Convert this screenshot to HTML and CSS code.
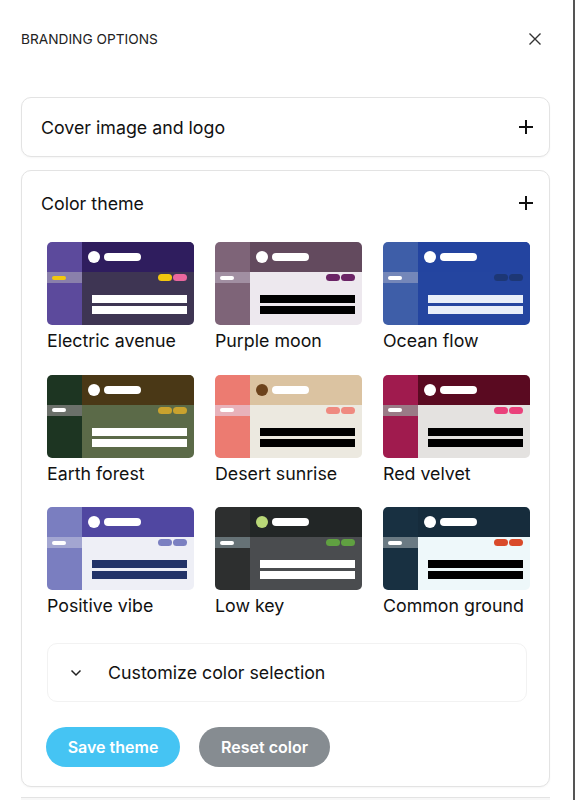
FILE: index.html
```html
<!DOCTYPE html>
<html>
<head>
<meta charset="utf-8">
<link rel="stylesheet" href="styles.css">
</head>
<body>
<div class="panel">
  <header class="head">
    <span class="head-title">BRANDING OPTIONS</span>
    <svg class="close" width="14" height="14" viewBox="0 0 14 14"><path d="M1.5 1.5 L12.5 12.5 M12.5 1.5 L1.5 12.5" stroke="#333" stroke-width="1.4" fill="none"/></svg>
  </header>

  <section class="card card-row">
    <span class="card-title">Cover image and logo</span>
    <svg class="plus" width="16" height="16" viewBox="0 0 16 16"><path d="M8 1 V15 M1 8 H15" stroke="#111" stroke-width="2" fill="none"/></svg>
  </section>

  <section class="card theme-card">
    <div class="card-row theme-head">
      <span class="card-title">Color theme</span>
      <svg class="plus" width="16" height="16" viewBox="0 0 16 16"><path d="M8 1 V15 M1 8 H15" stroke="#111" stroke-width="2" fill="none"/></svg>
    </div>

    <div class="grid">
      <div class="theme t-electric">
        <div class="thumb"><div class="side"><div class="strip"><i class="sbar"></i></div></div><div class="main"><div class="top"><i class="dot"></i><i class="pill"></i></div><div class="tags"><i></i><i class="b"></i></div><div class="lines"><i></i><i></i></div></div></div>
        <div class="label">Electric avenue</div>
      </div>
      <div class="theme t-purple">
        <div class="thumb"><div class="side"><div class="strip"><i class="sbar"></i></div></div><div class="main"><div class="top"><i class="dot"></i><i class="pill"></i></div><div class="tags"><i></i><i class="b"></i></div><div class="lines"><i></i><i></i></div></div></div>
        <div class="label">Purple moon</div>
      </div>
      <div class="theme t-ocean">
        <div class="thumb"><div class="side"><div class="strip"><i class="sbar"></i></div></div><div class="main"><div class="top"><i class="dot"></i><i class="pill"></i></div><div class="tags"><i></i><i class="b"></i></div><div class="lines"><i></i><i></i></div></div></div>
        <div class="label">Ocean flow</div>
      </div>
      <div class="theme t-earth">
        <div class="thumb"><div class="side"><div class="strip"><i class="sbar"></i></div></div><div class="main"><div class="top"><i class="dot"></i><i class="pill"></i></div><div class="tags"><i></i><i class="b"></i></div><div class="lines"><i></i><i></i></div></div></div>
        <div class="label">Earth forest</div>
      </div>
      <div class="theme t-desert">
        <div class="thumb"><div class="side"><div class="strip"><i class="sbar"></i></div></div><div class="main"><div class="top"><i class="dot"></i><i class="pill"></i></div><div class="tags"><i></i><i class="b"></i></div><div class="lines"><i></i><i></i></div></div></div>
        <div class="label">Desert sunrise</div>
      </div>
      <div class="theme t-red">
        <div class="thumb"><div class="side"><div class="strip"><i class="sbar"></i></div></div><div class="main"><div class="top"><i class="dot"></i><i class="pill"></i></div><div class="tags"><i></i><i class="b"></i></div><div class="lines"><i></i><i></i></div></div></div>
        <div class="label">Red velvet</div>
      </div>
      <div class="theme t-positive">
        <div class="thumb"><div class="side"><div class="strip"><i class="sbar"></i></div></div><div class="main"><div class="top"><i class="dot"></i><i class="pill"></i></div><div class="tags"><i></i><i class="b"></i></div><div class="lines"><i></i><i></i></div></div></div>
        <div class="label">Positive vibe</div>
      </div>
      <div class="theme t-low">
        <div class="thumb"><div class="side"><div class="strip"><i class="sbar"></i></div></div><div class="main"><div class="top"><i class="dot"></i><i class="pill"></i></div><div class="tags"><i></i><i class="b"></i></div><div class="lines"><i></i><i></i></div></div></div>
        <div class="label">Low key</div>
      </div>
      <div class="theme t-common">
        <div class="thumb"><div class="side"><div class="strip"><i class="sbar"></i></div></div><div class="main"><div class="top"><i class="dot"></i><i class="pill"></i></div><div class="tags"><i></i><i class="b"></i></div><div class="lines"><i></i><i></i></div></div></div>
        <div class="label">Common ground</div>
      </div>
    </div>

    <div class="customize">
      <svg class="chev" width="12" height="8" viewBox="0 0 12 8"><path d="M1.5 1.5 L6 6 L10.5 1.5" stroke="#222" stroke-width="1.5" fill="none"/></svg>
      <span class="card-title">Customize color selection</span>
    </div>

    <div class="actions">
      <button class="btn btn-save">Save theme</button>
      <button class="btn btn-reset">Reset color</button>
    </div>
  </section>
  <div class="next-card"></div>
</div>
</body>
</html>
```

FILE: styles.css
```css
* { box-sizing: border-box; }
html, body { margin: 0; padding: 0; background: #fff; }
body {
  font-family: Inter, "Liberation Sans", Arial, sans-serif;
  color: #111;
  width: 575px;
  height: 800px;
  overflow: hidden;
  border-right: 2px solid #555;
}
.panel {
  padding: 0 23px 0 21px;
}
.head {
  height: 78px;
  display: flex;
  align-items: center;
  justify-content: space-between;
  padding-right: 8px;
}
.head-title {
  font-size: 13.7px;
  color: #222;
}
.close { display: block; }

.card {
  border: 1px solid #e3e3e3;
  border-radius: 10px;
  background: #fff;
  box-shadow: 0 1px 2px rgba(0,0,0,0.04);
}
.card-row {
  display: flex;
  align-items: center;
  justify-content: space-between;
}
section.card-row {
  height: 60px;
  margin-top: 19px;
  padding: 0 15px 0 19px;
}
.card-title {
  font-size: 17.8px;
  color: #111;
}
.plus { display: block; }

.theme-card {
  margin-top: 13px;
  padding: 21px 15px 19px 25px;
}
.theme-head {
  height: 22px;
  margin-left: -6px;
}
.grid {
  margin-top: 28px;
  display: grid;
  grid-template-columns: repeat(3, 147px);
  column-gap: 21px;
  row-gap: 22.5px;
}
.theme { display: flex; flex-direction: column; }
.label {
  margin-top: 5px;
  font-size: 17.8px;
  line-height: 22px;
  color: #111;
  white-space: nowrap;
}
.thumb {
  width: 147px;
  height: 83px;
  border-radius: 5px;
  overflow: hidden;
  display: flex;
}
.side {
  width: 35px;
  flex: none;
  padding-top: 30px;
}
.strip {
  height: 11px;
  display: flex;
  align-items: center;
  padding-left: 5px;
}
.sbar {
  display: block;
  width: 14px;
  height: 4px;
  border-radius: 2px;
  background: #fff;
}
.main {
  flex: 1;
  display: flex;
  flex-direction: column;
}
.top {
  height: 30px;
  display: flex;
  align-items: center;
  padding-left: 6px;
  gap: 4px;
}
.dot {
  display: block;
  width: 12px;
  height: 12px;
  border-radius: 50%;
  background: #fff;
}
.pill {
  display: block;
  width: 37px;
  height: 8px;
  border-radius: 4px;
  background: #fff;
}
.tags {
  height: 11px;
  display: flex;
  justify-content: flex-end;
  align-items: center;
  gap: 1px;
  padding-right: 7px;
}
.tags i {
  display: block;
  width: 14px;
  height: 7px;
  border-radius: 3.5px;
}
.lines {
  margin-top: 12px;
  display: flex;
  flex-direction: column;
  gap: 3px;
  padding: 0 7px 0 10px;
}
.lines i {
  display: block;
  height: 8px;
}

/* themes */
.t-electric .side { background: #5c4a9c; }
.t-electric .strip { background: #8a80ab; }
.t-electric .sbar { background: #f2c80c; }
.t-electric .top { background: #2f1d5e; }
.t-electric .main { background: #3e3553; }
.t-electric .tags i { background: #f2c60f; }
.t-electric .tags i.b { background: #ea679e; }
.t-electric .lines i { background: #fff; }

.t-purple .side { background: #7e6478; }
.t-purple .strip { background: #a18fa2; }
.t-purple .top { background: #634a5e; }
.t-purple .main { background: #ede8ee; }
.t-purple .tags i { background: #6b2466; }
.t-purple .lines i { background: #000; }

.t-ocean .side { background: #3e5ea8; }
.t-ocean .strip { background: #7487b9; }
.t-ocean .top { background: #2344a0; }
.t-ocean .main { background: #2445a0; }
.t-ocean .tags i { background: #1d3775; }
.t-ocean .lines i { background: #e8eef9; }

.t-earth .side { background: #1d3522; }
.t-earth .strip { background: #6b706a; }
.t-earth .top { background: #4a3816; }
.t-earth .main { background: #5b6a48; }
.t-earth .tags i { background: #c9a22e; }
.t-earth .lines i { background: #fff; }

.t-desert .side { background: #ec7b71; }
.t-desert .strip { background: #e8b2ba; }
.t-desert .top { background: #dbc3a1; }
.t-desert .dot { background: #6d431c; }
.t-desert .main { background: #ece9e0; }
.t-desert .tags i { background: #ef8a80; }
.t-desert .lines i { background: #000; }

.t-red .side { background: #a01b4e; }
.t-red .strip { background: #9a7a86; }
.t-red .top { background: #5a0a21; }
.t-red .main { background: #e4e2e0; }
.t-red .tags i { background: #ea417b; }
.t-red .lines i { background: #000; }

.t-positive .side { background: #7a7ec0; }
.t-positive .strip { background: #a3a6d1; }
.t-positive .top { background: #5047a1; }
.t-positive .main { background: #eeeff6; }
.t-positive .tags i { background: #7b80c1; }
.t-positive .lines i { background: #233368; }

.t-low .side { background: #2d2f2f; }
.t-low .strip { background: #667276; }
.t-low .top { background: #222626; }
.t-low .dot { background: #b9d878; }
.t-low .main { background: #4a4c4f; }
.t-low .tags i { background: #60a041; }
.t-low .lines i { background: #fff; }

.t-common .side { background: #183041; }
.t-common .strip { background: #6a7a83; }
.t-common .top { background: #162c3c; }
.t-common .main { background: #eef8fa; }
.t-common .tags i { background: #d94a2a; }
.t-common .lines i { background: #000; }

.customize {
  margin-top: 26px;
  margin-right: 7px;
  height: 59px;
  border: 1px solid #f2f2f2;
  border-radius: 10px;
  display: flex;
  align-items: center;
  gap: 26px;
  padding-left: 22px;
}
.chev { display: block; }

.actions {
  margin-top: 25px;
  display: flex;
  gap: 19px;
  margin-left: -1px;
}
.btn {
  height: 40px;
  border: none;
  border-radius: 20px;
  font-family: Inter, "Liberation Sans", Arial, sans-serif;
  font-size: 16px;
  font-weight: 600;
  color: #fff;
  padding: 0;
}
.btn-save { background: #45c4f3; width: 134px; }
.btn-reset { background: #868c91; width: 131px; }

.next-card {
  margin-top: 10px;
  height: 20px;
  border-top: 1px solid #e3e3e3;
  background: #f7f7f7;
}
```
